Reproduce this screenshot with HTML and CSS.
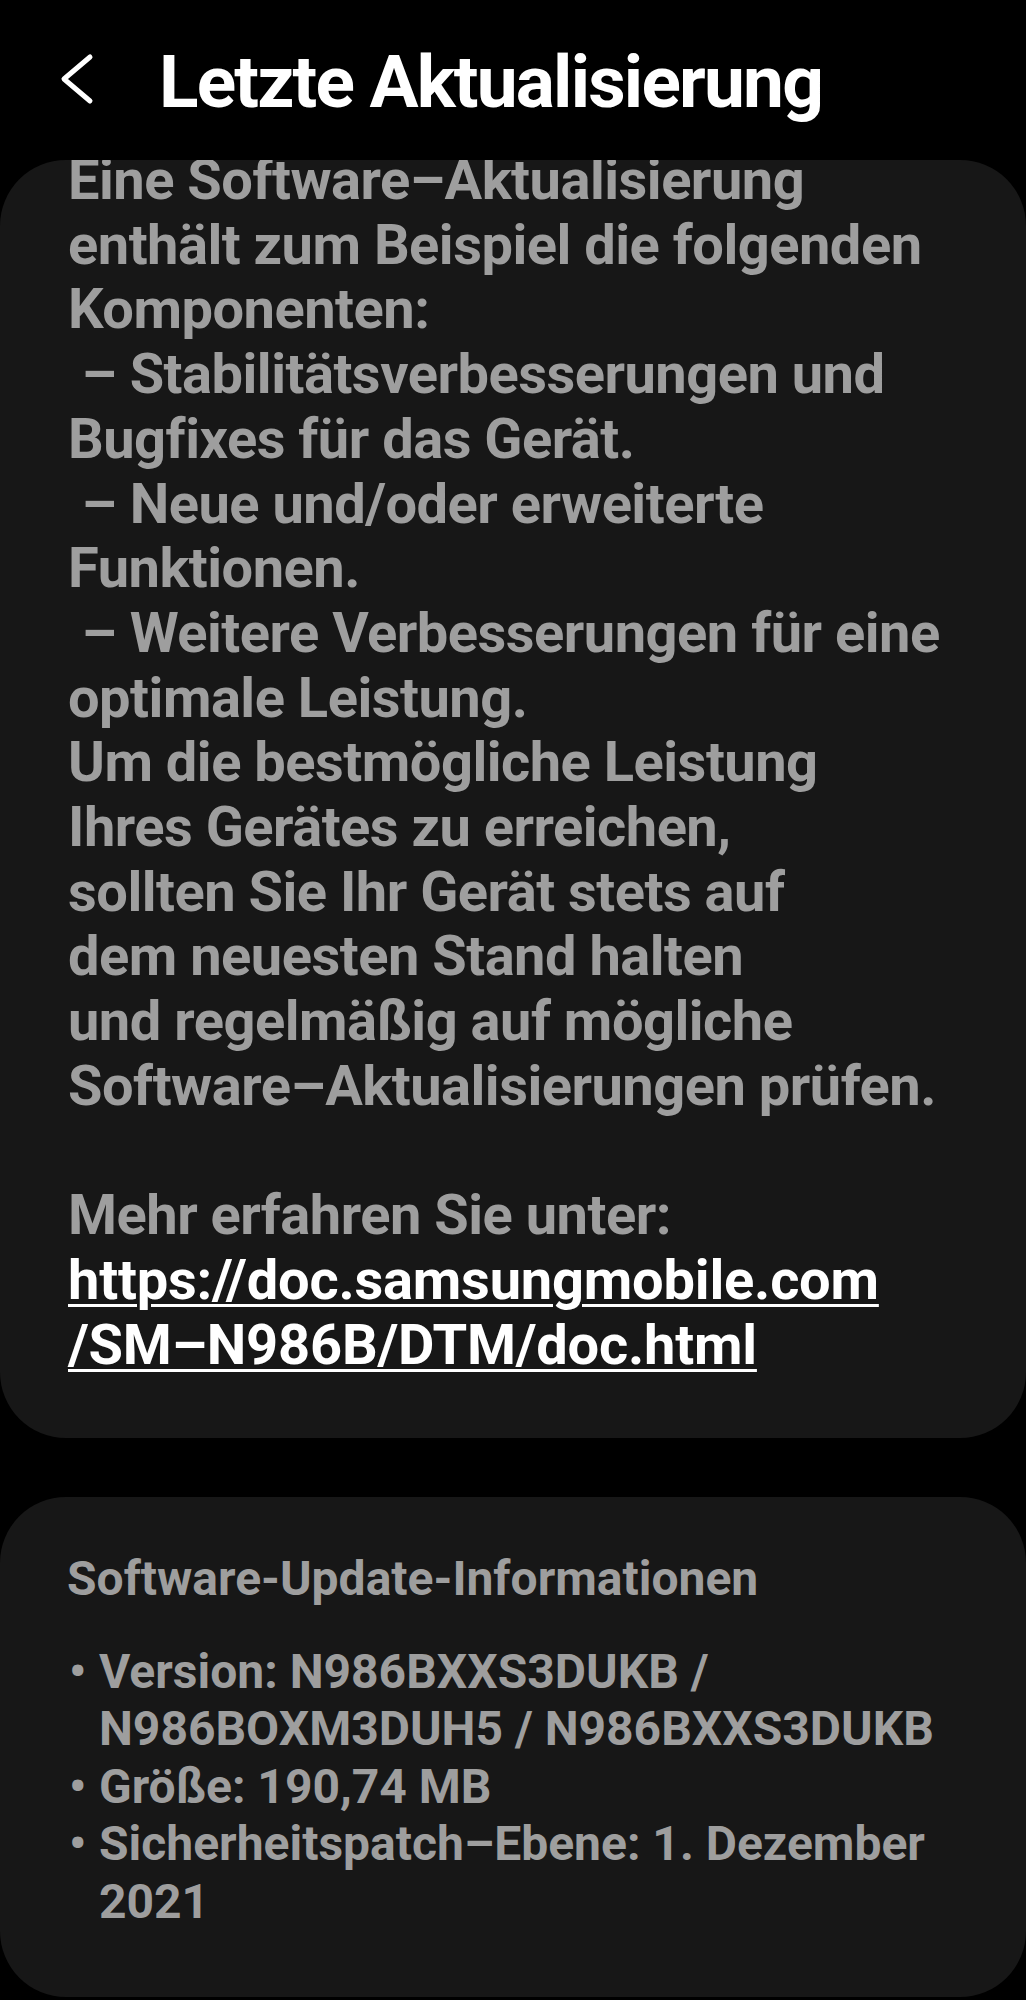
FILE: index.html
```html
<!DOCTYPE html>
<html lang="de">
<head>
<meta charset="utf-8">
<title>Letzte Aktualisierung</title>
<link rel="stylesheet" href="styles.css">
</head>
<body>
<header class="topbar">
  <svg class="back" width="38" height="54" viewBox="0 0 38 54"><polyline points="32,5 6,27 32,49" fill="none" stroke="#ffffff" stroke-width="5" stroke-linecap="round" stroke-linejoin="round"/></svg>
  <h1 class="title">Letzte Aktualisierung</h1>
</header>
<main class="content">
  <section class="card card-notes">
    <div class="notes">Eine Software–Aktualisierung
enthält zum Beispiel die folgenden
Komponenten:
 – Stabilitätsverbesserungen und
Bugfixes für das Gerät.
 – Neue und/oder erweiterte
Funktionen.
 – Weitere Verbesserungen für eine
optimale Leistung.
Um die bestmögliche Leistung
Ihres Gerätes zu erreichen,
sollten Sie Ihr Gerät stets auf
dem neuesten Stand halten
und regelmäßig auf mögliche
Software–Aktualisierungen prüfen.

Mehr erfahren Sie unter:
<a class="link" href="#">https://doc.samsungmobile.com</a>
<a class="link" href="#">/SM–N986B/DTM/doc.html</a></div>
  </section>
  <section class="card card-info">
    <h2 class="info-title">Software-Update-Informationen</h2>
    <ul class="info-list">
      <li class="info-item"><span class="dot">•</span><span class="info-text">Version: N986BXXS3DUKB /<br>N986BOXM3DUH5 / N986BXXS3DUKB</span></li>
      <li class="info-item"><span class="dot">•</span><span class="info-text">Größe: 190,74 MB</span></li>
      <li class="info-item"><span class="dot">•</span><span class="info-text">Sicherheitspatch–Ebene: 1. Dezember<br>2021</span></li>
    </ul>
  </section>
</main>
</body>
</html>
```
FILE: styles.css
```css
html, body {
  margin: 0;
  padding: 0;
  background: #000000;
}

body {
  font-family: Roboto, "Noto Sans", "Liberation Sans", sans-serif;
  font-weight: 700;
  -webkit-font-smoothing: antialiased;
}

.topbar {
  display: flex;
  align-items: flex-start;
  height: 160px;
  box-sizing: border-box;
}

.back {
  display: block;
  flex: none;
  margin-top: 52px;
  margin-left: 58px;
}

.title {
  margin: 45.5px 0 0 63px;
  font-size: 73px;
  line-height: 73px;
  font-weight: 700;
  letter-spacing: -1.8px;
  color: #ffffff;
  white-space: nowrap;
}

.content {
  display: flex;
  flex-direction: column;
  gap: 59px;
}

.card {
  background: #171717;
  border-radius: 66px;
  overflow: hidden;
}

.card-notes {
  padding: 0 30px 60.5px 68px;
}

.notes {
  margin-top: -12px;
  font-size: 56px;
  line-height: 64.7px;
  letter-spacing: -0.5px;
  color: #9e9e9e;
  white-space: pre-wrap;
}

.link {
  color: #ffffff;
  letter-spacing: -0.2px;
  text-decoration: underline;
  text-decoration-thickness: 3px;
  text-underline-offset: 5px;
}

.card-info {
  padding: 53px 30px 67px 67px;
}

.info-title {
  margin: 0;
  font-size: 48px;
  line-height: 57.5px;
  font-weight: 700;
  color: #9e9e9e;
}

.info-list {
  list-style: none;
  margin: 35.5px 0 0 0;
  padding: 0;
  font-size: 48px;
  line-height: 57.5px;
  color: #9e9e9e;
}

.info-item {
  display: grid;
  grid-template-columns: 32px 1fr;
}

.dot {
  display: block;
  padding-left: 2px;
}

.info-text {
  display: block;
  white-space: nowrap;
}
```
